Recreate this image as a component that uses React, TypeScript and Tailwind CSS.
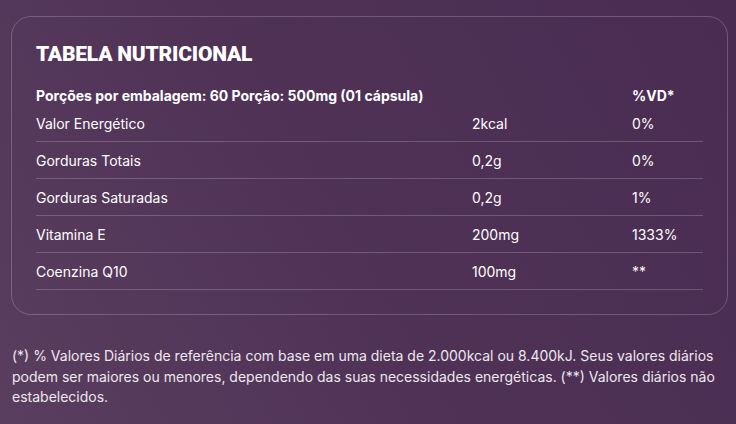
const rows = [
  { name: 'Valor Energético', qty: '2kcal', vd: '0%' },
  { name: 'Gorduras Totais', qty: '0,2g', vd: '0%' },
  { name: 'Gorduras Saturadas', qty: '0,2g', vd: '1%' },
  { name: 'Vitamina E', qty: '200mg', vd: '1333%' },
  { name: 'Coenzina Q10', qty: '100mg', vd: '**' },
];

export default function App() {
  return (
    <div
      className="min-h-[424px] w-full pt-4 bg-[linear-gradient(60deg,#5a3e5f_0%,#4f3256_45%,#4a2c52_100%)] text-white"
      style={{ fontFamily: 'Inter, Roboto, "Liberation Sans", sans-serif' }}
    >
      <div className="ml-[11px] w-[717px] rounded-[20px] border border-white/20 px-6 pt-[23px] pb-6">
        <h2
          className="text-[21px] leading-[28px] font-black uppercase tracking-[-0.01em] mb-[17px]"
          style={{ fontFamily: 'Roboto, "DejaVu Sans", sans-serif' }}
        >
          Tabela Nutricional
        </h2>

        <div className="grid grid-cols-[436px_160px_1fr] h-[20px] items-center text-[14px] font-bold">
          <div className="col-span-2">Porções por embalagem: 60 Porção: 500mg (01 cápsula)</div>
          <div>%VD*</div>
        </div>

        {rows.map(r => (
          <div
            key={r.name}
            className="grid grid-cols-[436px_160px_1fr] h-[37px] items-center border-b border-white/20 text-[14px]"
          >
            <div>{r.name}</div>
            <div>{r.qty}</div>
            <div>{r.vd}</div>
          </div>
        ))}
      </div>

      <p className="mt-[31px] pl-3 pr-5 text-[14px] leading-[20.5px] text-[#ece8ee]">
        (*) % Valores Diários de referência com base em uma dieta de 2.000kcal ou 8.400kJ. Seus valores diários
        podem ser maiores ou menores, dependendo das suas necessidades energéticas. (**) Valores diários não
        estabelecidos.
      </p>
    </div>
  );
}
